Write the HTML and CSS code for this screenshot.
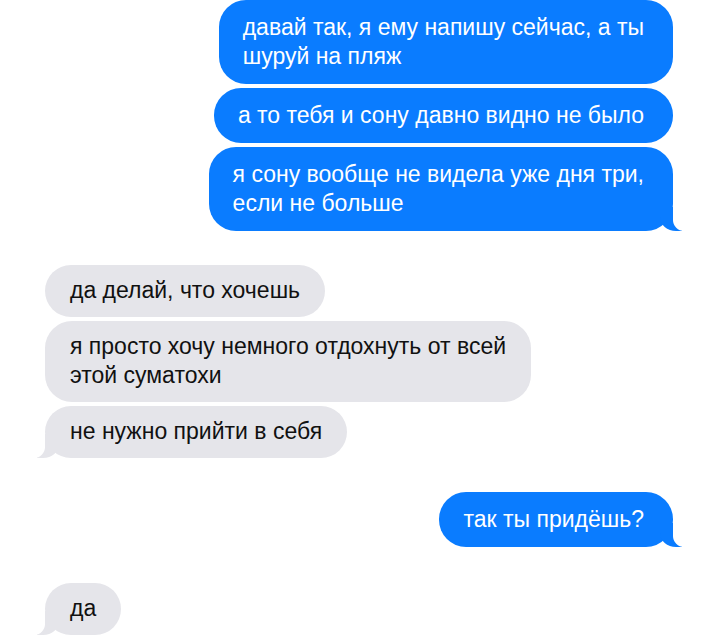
FILE: index.html
```html
<!DOCTYPE html>
<html lang="ru">
<head>
  <meta charset="UTF-8" />
  <meta name="viewport" content="width=device-width, initial-scale=1.0"/>
  <title>Сообщения</title>
  <link rel="stylesheet" href="styles.css">
</head>
<body>
  <div class="chat">
    <div class="msg out">давай так, я ему напишу сейчас, а ты<br>шуруй на пляж</div>
    <div class="msg out">а то тебя и сону давно видно не было</div>
    <div class="msg out tail">я сону вообще не видела уже дня три,<br>если не больше</div>

    <div class="msg in first">да делай, что хочешь</div>
    <div class="msg in">я просто хочу немного отдохнуть от всей<br>этой суматохи</div>
    <div class="msg in tail">не нужно прийти в себя</div>

    <div class="msg out first tail">так ты придёшь?</div>

    <div class="msg in first last tail">да</div>
  </div>
</body>
</html>
```

FILE: styles.css
```css
* {
  box-sizing: border-box;
}
body {
  margin: 0;
  background: #fff;
  font-family: "Liberation Sans", Arial, sans-serif;
}
.chat {
  display: flex;
  flex-direction: column;
  gap: 4px;
  padding: 0 47px 0 45px;
}
.msg {
  position: relative;
  padding: 13px 29px 13px 24px;
  border-radius: 27px;
  font-size: 23px;
  line-height: 29px;
}
.msg.first {
  margin-top: 30px;
}
.msg.last {
  margin-top: 32px;
}
.out {
  align-self: flex-end;
  max-width: 480px;
  background: #0a7cff;
  color: #fff;
}
.in {
  align-self: flex-start;
  max-width: 500px;
  background: #e5e5ea;
  color: #111;
  padding: 11px 25px 12px 25px;
}

/* хвостики пузырей */
.tail::before,
.tail::after {
  content: "";
  position: absolute;
  bottom: 0;
  height: 24px;
}
.out.tail::before {
  right: -9px;
  width: 22px;
  background: #0a7cff;
  border-bottom-left-radius: 16px 14px;
}
.out.tail::after {
  right: -26px;
  width: 26px;
  background: #fff;
  border-bottom-left-radius: 11px;
}
.in.tail::before {
  left: -8px;
  width: 22px;
  background: #e5e5ea;
  border-bottom-right-radius: 16px 14px;
}
.in.tail::after {
  left: -26px;
  width: 26px;
  background: #fff;
  border-bottom-right-radius: 11px;
}
```
